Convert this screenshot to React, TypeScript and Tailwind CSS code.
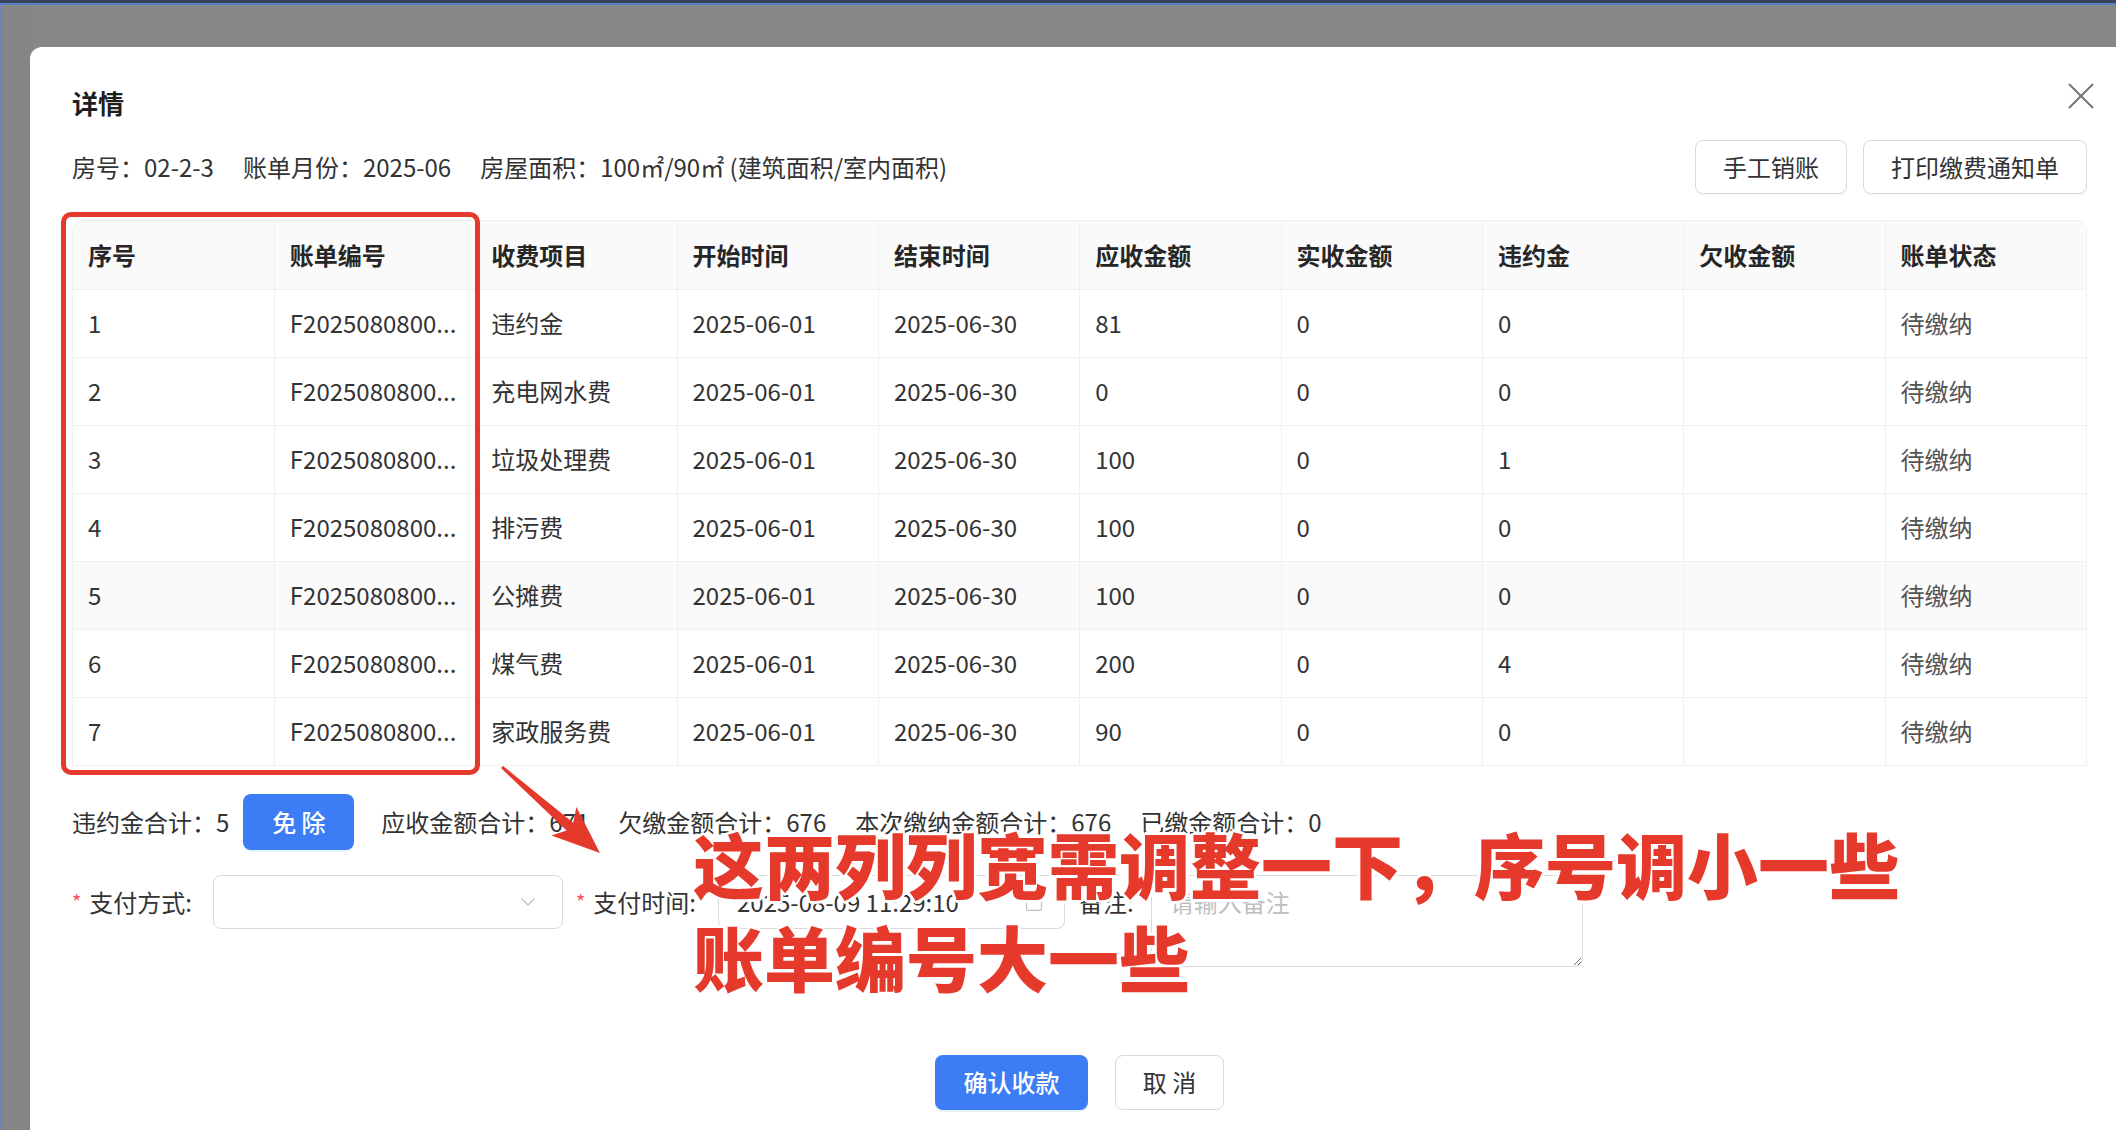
import React from 'react';
import { X, ChevronDown, Calendar } from 'lucide-react';

interface BillRow {
  id: number;
  billNo: string;
  item: string;
  start: string;
  end: string;
  receivable: string;
  received: string;
  penalty: string;
  owed: string;
  status: string;
}

const columns = ['序号', '账单编号', '收费项目', '开始时间', '结束时间', '应收金额', '实收金额', '违约金', '欠收金额', '账单状态'];

const rows: BillRow[] = [
  { id: 1, billNo: 'F2025080800...', item: '违约金', start: '2025-06-01', end: '2025-06-30', receivable: '81', received: '0', penalty: '0', owed: '', status: '待缴纳' },
  { id: 2, billNo: 'F2025080800...', item: '充电网水费', start: '2025-06-01', end: '2025-06-30', receivable: '0', received: '0', penalty: '0', owed: '', status: '待缴纳' },
  { id: 3, billNo: 'F2025080800...', item: '垃圾处理费', start: '2025-06-01', end: '2025-06-30', receivable: '100', received: '0', penalty: '1', owed: '', status: '待缴纳' },
  { id: 4, billNo: 'F2025080800...', item: '排污费', start: '2025-06-01', end: '2025-06-30', receivable: '100', received: '0', penalty: '0', owed: '', status: '待缴纳' },
  { id: 5, billNo: 'F2025080800...', item: '公摊费', start: '2025-06-01', end: '2025-06-30', receivable: '100', received: '0', penalty: '0', owed: '', status: '待缴纳' },
  { id: 6, billNo: 'F2025080800...', item: '煤气费', start: '2025-06-01', end: '2025-06-30', receivable: '200', received: '0', penalty: '4', owed: '', status: '待缴纳' },
  { id: 7, billNo: 'F2025080800...', item: '家政服务费', start: '2025-06-01', end: '2025-06-30', receivable: '90', received: '0', penalty: '0', owed: '', status: '待缴纳' },
];

const Required = () => <span className="mr-[8px] text-[20px] text-[#ff4d4f]">*</span>;

export default function App() {
  return (
    <div className="relative h-[1130px] w-[2116px] overflow-hidden bg-[#878787] font-['Noto_Sans_CJK_SC','Noto_Sans',sans-serif] text-[#333]">
      {/* top nav sliver behind the mask */}
      <div className="h-[3px] bg-[#37435c]" />
      <div className="h-[2px] bg-[#5b80c4]" />

      <div className="flex h-[1125px]">
        <div className="w-[30px] shrink-0 border-l-2 border-[#6a84b8] bg-[#858585]" />

        {/* dialog */}
        <div className="relative mt-[42px] flex-1 rounded-tl-[12px] bg-white pl-[42px] pr-[29px] pt-[40px]">
          <button className="absolute right-[12px] top-[26px] text-[#777]">
            <X size={46} strokeWidth={1.1} />
          </button>

          <div className="h-[32px] text-[26px] font-bold leading-[32px] text-[#1f1f1f]">详情</div>

          <div className="mt-[21px] flex h-[54px] items-center justify-between">
            <div className="flex items-center gap-[29px] text-[24px] text-[#333]">
              <span>房号：02-2-3</span>
              <span>账单月份：2025-06</span>
              <span>房屋面积：100㎡/90㎡ (建筑面积/室内面积)</span>
            </div>
            <div className="flex items-center gap-[16px]">
              <button className="h-[54px] rounded-[8px] border border-[#d9d9d9] bg-white px-[27px] text-[24px] text-[#333] shadow-[0_2px_0_rgba(0,0,0,0.02)]">
                手工销账
              </button>
              <button className="h-[54px] rounded-[8px] border border-[#d9d9d9] bg-white px-[27px] text-[24px] text-[#333] shadow-[0_2px_0_rgba(0,0,0,0.02)]">
                打印缴费通知单
              </button>
            </div>
          </div>

          {/* bill table */}
          <div className="mt-[26px] overflow-hidden rounded-t-[10px] border-l border-t border-[#f0f0f0]">
            <table className="w-full table-fixed border-collapse text-[24px]">
              <thead>
                <tr>
                  {columns.map((c) => (
                    <th
                      key={c}
                      className="h-[68px] border-b border-r border-[#f0f0f0] bg-[#fafafa] px-[15px] text-left font-bold text-[#262626]"
                    >
                      {c}
                    </th>
                  ))}
                </tr>
              </thead>
              <tbody>
                {rows.map((r) => (
                  <tr key={r.id} className={r.id === 5 ? 'bg-[#fafafa]' : 'bg-white'}>
                    <td className="h-[68px] border-b border-r border-[#f0f0f0] px-[15px] text-[#333]">{r.id}</td>
                    <td className="truncate border-b border-r border-[#f0f0f0] px-[15px] text-[#333]">{r.billNo}</td>
                    <td className="border-b border-r border-[#f0f0f0] px-[15px] text-[#333]">{r.item}</td>
                    <td className="border-b border-r border-[#f0f0f0] px-[15px] text-[#333]">{r.start}</td>
                    <td className="border-b border-r border-[#f0f0f0] px-[15px] text-[#333]">{r.end}</td>
                    <td className="border-b border-r border-[#f0f0f0] px-[15px] text-[#333]">{r.receivable}</td>
                    <td className="border-b border-r border-[#f0f0f0] px-[15px] text-[#333]">{r.received}</td>
                    <td className="border-b border-r border-[#f0f0f0] px-[15px] text-[#333]">{r.penalty}</td>
                    <td className="border-b border-r border-[#f0f0f0] px-[15px] text-[#333]">{r.owed}</td>
                    <td className="border-b border-r border-[#f0f0f0] px-[15px] text-[#555]">{r.status}</td>
                  </tr>
                ))}
              </tbody>
            </table>
          </div>

          {/* totals */}
          <div className="mt-[28px] flex h-[56px] items-center text-[24px] text-[#333]">
            <span>违约金合计：5</span>
            <button className="ml-[14px] h-[56px] w-[111px] rounded-[8px] bg-[#3c7cf5] text-[24px] font-medium text-white shadow-[0_2px_0_rgba(5,145,255,0.1)]">
              免 除
            </button>
            <div className="ml-[27px] flex items-center gap-[29px]">
              <span>应收金额合计：671</span>
              <span>欠缴金额合计：676</span>
              <span>本次缴纳金额合计：676</span>
              <span>已缴金额合计：0</span>
            </div>
          </div>

          {/* payment form */}
          <div className="mt-[25px] flex items-start text-[24px] text-[#333]">
            <div className="flex h-[54px] items-center">
              <Required />
              <span>支付方式:</span>
            </div>
            <div className="ml-[21px] flex h-[54px] w-[350px] items-center justify-end rounded-[8px] border border-[#d9d9d9] pr-[22px]">
              <ChevronDown size={24} strokeWidth={1.4} className="text-[#bfbfbf]" />
            </div>

            <div className="ml-[13px] flex h-[54px] items-center">
              <Required />
              <span>支付时间:</span>
            </div>
            <div className="ml-[22px] flex h-[54px] w-[347px] items-center justify-between rounded-[8px] border border-[#d9d9d9] pl-[18px] pr-[20px]">
              <span className="text-[#333]">2025-08-09 11:29:10</span>
              <Calendar size={20} strokeWidth={1.4} className="text-[#bfbfbf]" />
            </div>

            <div className="ml-[14px] flex h-[54px] items-center">
              <span>备注:</span>
            </div>
            <textarea
              readOnly
              placeholder="请输入备注"
              className="ml-[17px] h-[92px] w-[432px] rounded-[8px] border border-[#d9d9d9] px-[18px] py-[10px] text-[24px] leading-[32px] placeholder:text-[#bfbfbf] focus:outline-none"
            />
          </div>

          {/* footer */}
          <div className="mt-[88px] flex justify-center gap-[27px]">
            <button className="h-[55px] w-[153px] rounded-[8px] bg-[#3c7cf5] text-[24px] font-medium text-white shadow-[0_2px_0_rgba(5,145,255,0.1)]">
              确认收款
            </button>
            <button className="h-[55px] w-[109px] rounded-[8px] border border-[#d9d9d9] bg-white text-[24px] text-[#333]">
              取 消
            </button>
          </div>
        </div>
      </div>

      {/* review markup drawn on top */}
      <div className="pointer-events-none absolute inset-0">
        <div className="absolute left-[61px] top-[212px] h-[563px] w-[419px] rounded-[10px] border-[5px] border-[#e5392b]" />
        <svg className="absolute left-0 top-0" width="2116" height="1130">
          <polygon
            points="503,765.9 573.2,822.8 576.4,807 600,853 551.4,835.6 566.6,830.4 501,768.1"
            fill="#e5392b"
          />
        </svg>
        <div className="absolute left-[693px] top-[816px] whitespace-nowrap text-[71px] font-black leading-[93px] text-[#e5392b] [text-shadow:3px_0_#fff,-3px_0_#fff,0_3px_#fff,0_-3px_#fff,2px_2px_#fff,-2px_-2px_#fff,2px_-2px_#fff,-2px_2px_#fff]">
          <div>这两列列宽需调整一下，序号调小一些</div>
          <div>账单编号大一些</div>
        </div>
      </div>
    </div>
  );
}
